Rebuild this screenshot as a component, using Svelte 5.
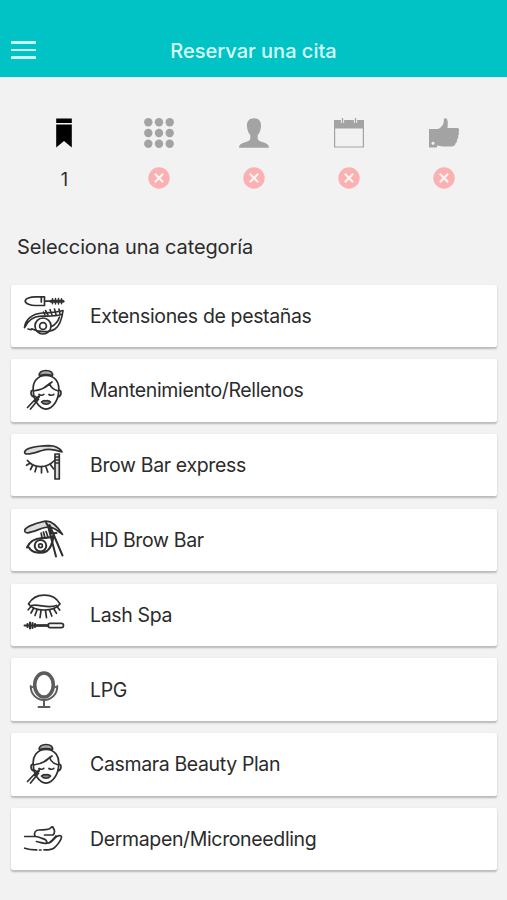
<script lang="ts">
type Category = { name: string; icon: string };

const steps: string[] = ['service', 'grid', 'person', 'calendar', 'confirm'];

const categories: Category[] = [
    { name: 'Extensiones de pestañas', icon: 'lashes' },
    { name: 'Mantenimiento/Rellenos', icon: 'face' },
    { name: 'Brow Bar express', icon: 'brow' },
    { name: 'HD Brow Bar', icon: 'tweezers' },
    { name: 'Lash Spa', icon: 'spa' },
    { name: 'LPG', icon: 'mirror' },
    { name: 'Casmara Beauty Plan', icon: 'face' },
    { name: 'Dermapen/Microneedling', icon: 'hand' }
];

let current: number = $state(0);
</script>

<div class="app">
    <header>
        <button class="menu" aria-label="Menú"><span></span><span></span><span></span></button>
        <h1>Reservar una cita</h1>
    </header>

    <nav>
        {#each steps as step, i}
            <div class="step" class:active={i == current}>
                <svg class="step-icon" viewBox="0 0 30 30">
                    {#if step == 'service'}
                        <path d="M7.2 .5h15.6v4.500H7.200zM7.200 6.400h15.600v23.200L15 23l-7.800 6.600z" />
                    {:else if step == 'grid'}
                        {#each [4.3, 15, 25.7] as y}
                            {#each [4.3, 15, 25.7] as x}
                                <circle cx={x} cy={y} r="4.2" />
                            {/each}
                        {/each}
                    {:else if step == 'person'}
                        <path d="M15 .2c5 0 7.500 3.300 7 8.300-.3 4-1.500 6.500-3.300 8.500v3.500c0 2.200 2 2.700 5.300 3.700 4 1.200 5.800 2.300 6 5.500H0c.2-3.200 2-4.300 6-5.500 3.300-1 5.300-1.500 5.300-3.700V17C9.500 15 8.300 12.500 8 8.500c-.5-5 2-8.300 7-8.300z" />
                    {:else if step == 'calendar'}
                        <path d="M.6 10V29h28.800V10" fill="none" stroke="currentColor" stroke-width="1.200" />
                        <path d="M0 2h30v8.500H0z" />
                        <path d="M8.500 0v5M21.500 0v5" stroke="#f2f2f2" stroke-width="3.200" />
                        <path d="M8.500 0v5M21.500 0v5" stroke="currentColor" stroke-width="1.300" />
                    {:else}
                        <path d="M0 11h8.500c2.500 0 4-2.500 5.500-4.500 1-1.500.5-3.500 1-5.500.5-1.500 2.800-.8 3.300.8.900 2.600.3 5.700.2 8.200h9.500c2.500 0 2.500 2.500 1.500 3.700.7 1.300.5 2.700-.4 3.800.5 1.500.1 2.900-1 3.800.3 1.500-.3 3-1.400 3.800-.3 2.400-2 3.400-4.200 3.400h-8.500c-2.500 0-4-1-6-1V29.600H0z" />
                        <circle cx="4" cy="25.300" r="1.500" fill="#f2f2f2" />
                    {/if}
                </svg>
                <div class="status">
                    {#if i == current}
                        1
                    {:else}
                        <svg class="badge" viewBox="0 0 22 22">
                            <circle cx="11" cy="11" r="10.700" fill="#fbb1b1" />
                            <path d="M6.800 6.800l8.400 8.400M15.200 6.800l-8.400 8.400" stroke="#fff4f2" stroke-width="2.200" />
                        </svg>
                    {/if}
                </div>
            </div>
        {/each}
    </nav>

    <h2>Selecciona una categoría</h2>

    <main>
        {#each categories as category}
            <button class="card">
                <svg class="category-icon" viewBox="0 0 60 60">
                    {#if category.icon == 'lashes'}
                        <path d="M29.500 10.800h-9c-5 0-10.300 1.700-10.300 4.200s5.300 4.500 10.300 4.500h9zM26.300 11v5" />
                        <path d="M30 15.200h6" />
                        <path d="M36 15.200h12" stroke-width="3" />
                        <path d="M37.500 12.800v5M40.500 12.600v5.400M43.500 12.600v5.400M46.500 12.800v5" stroke-width="1.500" />
                        <path d="M9.500 41.500c1-8 8-14 18-14.500 7-.4 13-.3 20.500-2.500-1 8-3 15-8 18.500-6 4-17 3.200-23.500-.2M9.500 41.500c3.500-7 9-11 16-11.300 7-.5 13 .5 21-1.700" />
                        <circle cx="28" cy="40" r="8" />
                        <circle cx="28" cy="40" r="3.400" />
                        <path d="M44.500 31c-1.500 4.500-3.500 7.500-8 9.500M13 43l3 .8" />
                        <path d="M33 29l-2.500-4.500M37 29l-2-5.500M41 28.500l-1.500-5.500M45 28l-1-5M30 29l-1.500-3" stroke-width="1.600" />
                    {:else if category.icon == 'face'}
                        <path d="M24.500 16c-1-3 1.500-5.500 6.500-5.500s7.300 2.500 6.300 5.500c-3-1.800-9.800-1.800-12.800 0z" fill="#aaa" />
                        <path d="M18.300 31c-1-8.500 3.500-15.500 12.700-15.500S44.500 22.500 43.700 31M18.300 31c.2 9 5.700 17.500 12.700 18.200 7-.7 12.500-9.200 12.700-18.200" />
                        <path d="M18.500 31c6.500-1 12.500-3 16-7.500 1.500 4.500 5 6.500 9 7.500M30 27l7-5" />
                        <path d="M18 30c-2.800.2-2.800 5.800 1 7M44 30c2.800.2 2.800 5.800-1 7" />
                        <path d="M24 34.500c1.200 1 3.500 1 4.800-.2M34 34.500c1.200 1 3.500 1 4.800-.2" />
                        <path d="M26.500 42c2-2 3.200-1.500 4.500-1.200 1.300-.3 2.500-.8 4.500 1.200-2.300 3-6.700 3-9 0z" fill="#888" />
                        <path d="M12.500 47.500l9-9.500M15.500 49l7-8.500M20.500 36.500l3 3" />
                        <path d="M20 41l3.800-4.300" stroke-width="2.600" />
                    {:else if category.icon == 'brow'}
                        <path d="M9.800 16.500C12 12.500 25 11 34 10.700c6 0 10.500 2.300 13 6.300-7-2.500-14-3.500-20-1.500-5 1.500-10.500 3.500-14.500 3.500-2.400 0-3.400-1-2.700-2.500z" fill="#ddd" />
                        <path d="M12.500 25.500c6 7.500 18.500 9 27.500-.5" />
                        <path d="M14.500 28.500l-3 1.800M17.500 30.500l-2 4M21.500 31.800l-1.500 5M26.500 32.300v5.500M31 32l1.800 5M35.500 29.800l3 4" />
                        <path d="M40 19h4.300v25H40zM40 22h4M40 25h4M40 28h4" fill="#ddd" />
                    {:else if category.icon == 'tweezers'}
                        <path d="M9.800 20C11 16 20 13.500 29 11.300c7-1.500 13 4 18.500 13.200-7-5.500-10.500-8.500-17.500-7-5.500 1.200-12 5-17.500 5.300-2 0-3.200-1.200-2.700-2.800z" fill="#ddd" />
                        <path d="M31 12.500l2 3.500 8 30.500M35.500 23l-1-8 13 30.500M36.500 23.500l5-.5" stroke-width="2" />
                        <path d="M12 37.500c2.500-6 8-9 15-9.500 4.500 0 8 0 11.500-2-1 7-2.500 12-6.500 15-5 3-15 2.300-18-3.500" stroke-width="2.100" />
                        <circle cx="25.500" cy="35.700" r="5.800" stroke-width="2" />
                        <circle cx="25.500" cy="35.700" r="1.900" />
                        <path d="M27 28l-.8-5M30 28l-1.500-6M33 27l-2-5.500" />
                    {:else if category.icon == 'spa'}
                        <path d="M13.500 19c6.500-11.500 25-12 31.500 0-6 8-25.500 8-31.500 0z" />
                        <path d="M16.500 20.500c7-2 16 3.500 25 0" />
                        <path d="M15.500 22l-2.300 2.800M18.500 23.500l-2.500 4.500M22 25l-2 5.500M26 25.600l-1 7M30.500 25.600l1 7M34.500 25l2.300 6M38.500 23.500l3 4.800M42 21.500l2.700 3.500" />
                        <path d="M9.500 40.500h22" stroke-width="2" />
                        <path d="M12.500 39v3M15 37.500v6M17.500 38v5M20 39v3" stroke-width="2.100" />
                        <path d="M22 40.500h11" stroke-width="2.600" />
                        <rect x="33" y="38.300" width="15.500" height="4.400" rx="2.200" />
                    {:else if category.icon == 'mirror'}
                        <g stroke="#5c5c5c">
                            <ellipse cx="29" cy="25" rx="9.300" ry="12" stroke-width="3.600" />
                            <path d="M15.700 26c-.2 7 5 14 13.300 14s13.500-7 13.300-14M15.700 28l1.800-1M42.300 28l-1.800-1" stroke-width="1.900" />
                            <path d="M29 40v6.500M23.500 47h11" stroke-width="2" />
                        </g>
                    {:else}
                        <path d="M20 27c-1.500-3 .5-6 4-6 4.500 0 8 0 10.500-1.200 1.500-.8 1.500-2.300 3.200-2 .3 1 1.800 2.500 1.800 4.500 0 2-.5 3-1.500 3.700H29.500" />
                        <path d="M9.700 27.500H20c3.500 0 4.500 1.200 7 1.800 3.500.8 5.500 2.700 4.500 4.700-1.800 1.500-5.500-.8-10-1.500M32 34c4.500.5 6.500-4 9-6 2.500-2 5.700-2 5.500.3-.5 2.500-3.500 6.700-6 9.500-2 2.300-4.500 3-7 3h-4.500M26 41h-1.500M9.700 39.200c4 1.300 7 1.800 12 1.700M35 33c3.500-3 5-4 6-6" />
                    {/if}
                </svg>
                <span>{category.name}</span>
            </button>
        {/each}
    </main>
</div>

<style>
:global(body) {
    background: #f2f2f2;
}

.app {
    height: 900px;
    overflow: hidden;
    background: #f2f2f2;
    font-family: Inter, "Liberation Sans", sans-serif;
    color: #2b2b2b;
}

header {
    height: 77px;
    box-sizing: border-box;
    padding-top: 23px;
    display: grid;
    grid-template-columns: 46px 1fr 46px;
    align-items: center;
    background: #01c2c4;
}

h1, h2 {
    margin: 0;
    font-size: 20px;
    font-weight: 400;
    white-space: nowrap;
}

h1 {
    padding-top: 1px;
    text-align: center;
    font-weight: 500;
    color: #d9fffd;
}

.menu {
    width: 25px;
    margin-left: 11px;
    padding: 0;
    border: 0;
    background: none;
    display: flex;
    flex-direction: column;
    gap: 5px;
}

.menu span {
    height: 2.4px;
    background: #c9fffb;
}

nav {
    width: 474px;
    height: 148px;
    box-sizing: border-box;
    padding-top: 41px;
    margin-left: 17px;
    display: flex;
}

.step {
    flex: 1;
    display: flex;
    flex-direction: column;
    align-items: center;
    color: #a3a3a3;
}

.step.active {
    color: #000;
}

.step-icon {
    width: 30px;
    height: 30px;
    fill: currentColor;
}

.status {
    height: 22px;
    margin-top: 19px;
    line-height: 25px;
    font-size: 18px;
    color: #2b2b2b;
}

.badge {
    display: block;
    width: 22px;
    height: 22px;
}

h2 {
    height: 59.5px;
    padding-left: 17px;
    box-sizing: border-box;
    line-height: 44px;
    letter-spacing: -0.12px;
}

main {
    padding: 0 10px 0 11px;
    display: flex;
    flex-direction: column;
    gap: 12.4px;
}

.card {
    width: 100%;
    height: 62.4px;
    padding: 0 0 0 4px;
    border: 0;
    border-radius: 2px;
    background: #fff;
    box-shadow: 0 1.5px 2px rgba(0, 0, 0, 0.24);
    display: flex;
    align-items: center;
    gap: 15px;
    font: inherit;
    font-size: 19.5px;
    letter-spacing: -0.36px;
    color: inherit;
    text-align: left;
    white-space: nowrap;
}

.category-icon {
    width: 60px;
    height: 60px;
    fill: none;
    stroke: #303030;
    stroke-width: 1.7;
    stroke-linecap: round;
    stroke-linejoin: round;
}
</style>
